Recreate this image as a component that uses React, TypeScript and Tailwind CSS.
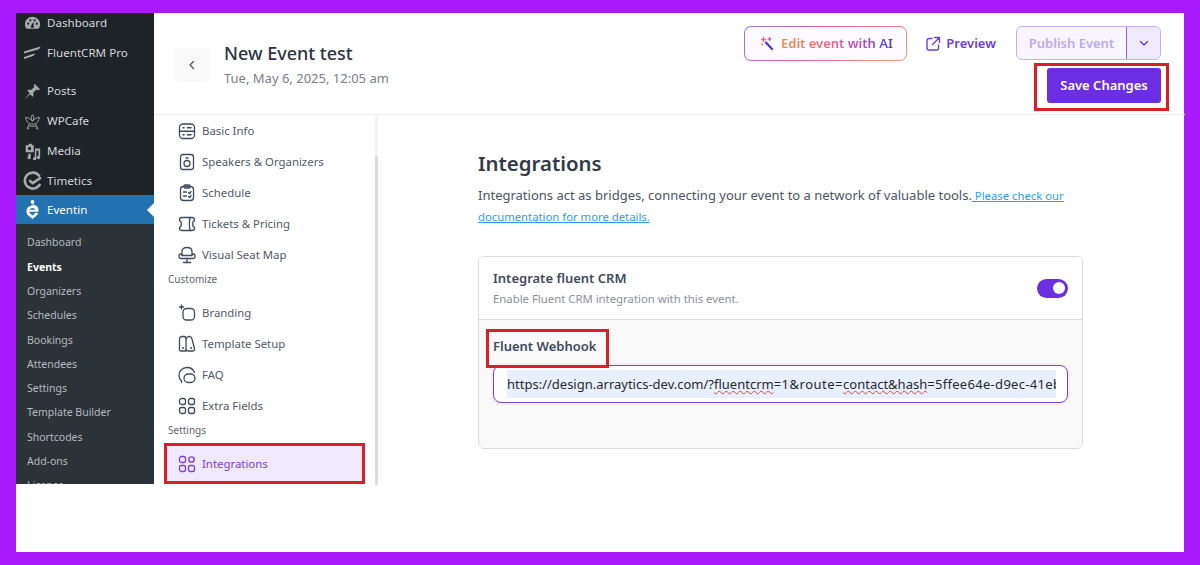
import React from "react";

const S = "#3f4a5c";

function I({ children, c = S, w = 20 }: { children: React.ReactNode; c?: string; w?: number }) {
  return (
    <svg width={w} height={w} viewBox="0 0 20 20" fill="none" stroke={c} strokeWidth="1.3" strokeLinecap="round" strokeLinejoin="round" className="shrink-0">
      {children}
    </svg>
  );
}

const navIcons: Record<string, React.ReactNode> = {
  basic: (
    <I>
      <rect x="2.500" y="3" width="15" height="14.500" rx="3.500" />
      <path d="M2.500 10.250h15M6 6.700h1M10.500 6.700h3.500M6 13.800h1M10.500 13.800h3.500" strokeWidth="1.600" />
    </I>
  ),
  speakers: (
    <I>
      <rect x="3.500" y="2.500" width="13" height="15" rx="2.500" />
      <circle cx="10" cy="11.500" r="3" />
      <path d="M9 6h2" />
    </I>
  ),
  schedule: (
    <I>
      <rect x="3.500" y="3.500" width="13" height="14" rx="3" />
      <rect x="7" y="2" width="6" height="3" rx="1" />
      <path d="M6.500 9h3M6.500 13h3M11.500 9.500l1 1 1.500-2M11.500 13.500l1 1 1.500-2" />
    </I>
  ),
  tickets: (
    <I>
      <path d="M5 3.500h10c1.500 0 2.500.7 2.500 2v1.200c-2.400.6-2.400 6 0 6.600v1.200c0 1.300-1 2-2.500 2H5c-1.500 0-2.500-.7-2.500-2v-1.200c2.400-.6 2.400-6 0-6.600V5.500c0-1.300 1-2 2.500-2z" />
      <path d="M13.500 3.500c-1.500 2-1.500 11 0 13" />
    </I>
  ),
  seat: (
    <I>
      <path d="M5 10V6.500C5 4 7 2.500 10 2.500s5 1.500 5 4V10" />
      <path d="M3.500 9c-1 0-1.500.8-1.500 1.600v1.200c0 1 .7 1.700 1.700 1.700h12.600c1 0 1.700-.7 1.700-1.700v-1.200c0-.8-.5-1.600-1.500-1.600-.8 0-1.500.6-1.500 1.500H5C5 9.600 4.300 9 3.500 9z" />
      <path d="M10 13.500v4M6.500 17.500h7" />
    </I>
  ),
  branding: (
    <I>
      <rect x="6" y="5.500" width="11.500" height="11.500" rx="3.500" />
      <path d="M4.500 2v4M2.500 4h4" />
    </I>
  ),
  template: (
    <I>
      <path d="M2.500 5c0-1.500 1-2.500 2.500-2.500h2C8.500 2.500 9 3.500 9 5v12H4c-1 0-1.500-.7-1.500-1.500z" />
      <path d="M9 5c.8-2 2-2.700 3.500-2.500 1.500.2 2.200 1.200 2.500 2.500l2.500 9.500c.2 1.500-.5 2.500-2 2.500h-4c-1.200 0-2.500-.7-2.500-1.500" />
      <path d="M6 14h.1M14 14h.1" strokeWidth="1.800" />
    </I>
  ),
  faq: (
    <I>
      <path d="M4.500 16C3 14.700 2 12.800 2 10.500 2 6 5.500 2.500 10 2.500c3.500 0 6.300 1.800 7.500 5" />
      <rect x="7" y="9" width="11" height="8.500" rx="4.200" />
      <path d="M4.500 16v1.500" />
    </I>
  ),
  extra: (
    <I>
      <rect x="2.500" y="2.500" width="6" height="6" rx="2" />
      <rect x="11.500" y="2.500" width="6" height="6" rx="2" />
      <rect x="2.500" y="11.500" width="6" height="6" rx="2" />
      <rect x="11.500" y="11.500" width="6" height="6" rx="2" />
    </I>
  ),
  integrations: (
    <I c="#7a3fe0">
      <rect x="2.500" y="2.500" width="6" height="6" rx="2" />
      <circle cx="14.500" cy="5.500" r="2.700" />
      <rect x="2.500" y="11.500" width="6" height="6" rx="2" />
      <rect x="11.500" y="11.500" width="6" height="6" rx="2" />
    </I>
  ),
};

function NavItem({ icon, label }: { icon: string; label: string }) {
  return (
    <div className="flex items-center gap-[5px] h-[31px] pl-[23px] text-[11.400px] text-[#515a68]">
      {navIcons[icon]}
      <span>{label}</span>
    </div>
  );
}

const G = "#a7aaad";

const wpIcons: Record<string, React.ReactNode> = {
  dashboard: (
    <svg width="17" height="17" viewBox="0 0 20 20" fill={G}>
      <path d="M10 2a9 9 0 0 0-8 13c.4.800 1 1.300 1.800 1.300h12.400c.8 0 1.400-.5 1.800-1.300A9 9 0 0 0 10 2zM5 11.500a1.300 1.300 0 1 1 0-2.600 1.300 1.300 0 0 1 0 2.600zm2.500-4a1.300 1.300 0 1 1 0-2.600 1.300 1.300 0 0 1 0 2.600zm3.800 7a1.700 1.700 0 0 1-3.200-.8c0-.7 3-5.700 3-5.700s.6 5.800.2 6.500zM12.500 7.500a1.300 1.300 0 1 1 0-2.600 1.300 1.300 0 0 1 0 2.600zm2.500 4a1.300 1.300 0 1 1 0-2.600 1.300 1.300 0 0 1 0 2.600z" />
    </svg>
  ),
  fluent: (
    <svg width="18" height="14" viewBox="0 0 18 14" fill={G}>
      <path d="M1 5.500C6 4 12 2 17.500.5 17 2 16.500 3 15 3.500L1 7.500z" />
      <path d="M1 11c3-1 7-2.500 11-3.500-.5 1.500-1 2.200-2.500 2.800L1 13z" />
    </svg>
  ),
  pin: (
    <svg width="17" height="17" viewBox="0 0 20 20" fill={G}>
      <path d="M19 7.500 12.500 1l-1 2.500.8 1-3.800 3.700c-1.700-.6-3.400-.4-4.800.6l3 3L1 19l6.200-5.700 3 3c1-1.400 1.200-3.100.6-4.800l3.700-3.800 1 .8z" />
    </svg>
  ),
  cafe: (
    <svg width="17" height="17" viewBox="0 0 20 20" fill="none" stroke={G} strokeWidth="1.100">
      <path d="M10 2c2 2.500 2 5 0 7.500C8 7 8 4.500 10 2zM2 5c3 .3 5.500 2 8 4.500 2.500-2.500 5-4.200 8-4.500-.3 3.500-2.200 6.500-5 8H7C4.200 11.500 2.300 8.500 2 5zM6 13l-1.500 4M14 13l1.500 4M6 15.500h8" />
      <circle cx="4.500" cy="18" r=".9" />
      <circle cx="15.500" cy="18" r=".9" />
    </svg>
  ),
  media: (
    <svg width="17" height="17" viewBox="0 0 20 20" fill={G}>
      <path d="M2 2.500h3l1-1.500h3l1 1.500h1.500V11H2zM6.500 8.500a2 2 0 1 0 0-4 2 2 0 0 0 0 4z" fillRule="evenodd" />
      <path d="M13 6.500h6V17a2 2 0 1 1-2-2V9h-2.500v9.500a2 2 0 1 1-2-2z" />
      <path d="M5 12.500h3V17a2 2 0 1 1-2-2h-1z" />
    </svg>
  ),
  timetics: (
    <svg width="19" height="19" viewBox="0 0 20 20" fill="none" stroke={G} strokeWidth="2.700" strokeLinecap="round" strokeLinejoin="round">
      <path d="M17 5A8.400 8.400 0 1 0 17.500 14.500" />
      <path d="M7.500 10.500l2.800 2.300 7.700-5.300" />
    </svg>
  ),
  eventin: (
    <svg width="13" height="19" viewBox="0 0 14 19" fill="#fff" preserveAspectRatio="none">
      <circle cx="7" cy="2" r="2" />
      <path d="M7 5.500c-3.600 0-6.500 2.500-6.500 5.800 0 2.200 1.200 3.800 3 5L7 19l3.500-2.700c1-.8 2-1.600 2.700-2.800l-2.500-1-3.700 3-2.400-2c-.6-.5-1-1.200-1-1.800h9.800c.1-.5.100-1 .1-1.400 0-3.300-2.900-5.800-6.500-5.800zM4 9.800C4.400 8.700 5.600 8 7 8s2.600.7 3 1.800z" fillRule="evenodd" />
    </svg>
  ),
};

function WpItem({ icon, label, h, active }: { icon: string; label: string; h: string; active?: boolean }) {
  return (
    <div className={`relative flex items-center ${h} ${active ? "bg-[#2271b1] text-white" : "text-[#d5d7d9]"}`}>
      <span className="w-[31px] flex justify-center shrink-0 pl-[1px]">{wpIcons[icon]}</span>
      <span>{label}</span>
      {active && (
        <span className="absolute right-0 top-1/2 -translate-y-1/2 border-y-[7px] border-y-transparent border-r-[7px] border-r-white" />
      )}
    </div>
  );
}

const subs = ["Dashboard", "Events", "Organizers", "Schedules", "Bookings", "Attendees", "Settings", "Template Builder", "Shortcodes", "Add-ons", "License"];

function WpSidebar() {
  return (
    <aside className="w-[138px] h-[471px] shrink-0 overflow-hidden bg-[#1d2327] text-[11.600px] leading-none">
      <WpItem icon="dashboard" label="Dashboard" h="h-[20px]" />
      <WpItem icon="fluent" label="FluentCRM Pro" h="h-[40px]" />
      <div className="h-[3px]" />
      <WpItem icon="pin" label="Posts" h="h-[30px]" />
      <WpItem icon="cafe" label="WPCafe" h="h-[30px]" />
      <WpItem icon="media" label="Media" h="h-[30px]" />
      <WpItem icon="timetics" label="Timetics" h="h-[29px]" />
      <WpItem icon="eventin" label="Eventin" h="h-[29px]" active />
      <div className="bg-[#2c3338] pt-[6.500px] h-[260px] overflow-hidden text-[10.500px]">
        {subs.map((s) => (
          <div key={s} className={`h-[24.300px] pl-[11px] flex items-center ${s === "Events" ? "font-bold text-white" : "text-[#b4b9be]"}`}>
            {s}
          </div>
        ))}
      </div>
    </aside>
  );
}

function Header() {
  return (
    <header className="h-[102px] shrink-0 border-b border-[#ececec] flex justify-between pl-[21px] pr-[24px]">
      <div className="flex items-center gap-[15px] h-[100px] pt-[4px]">
        <div className="w-[34px] h-[34px] rounded bg-[#f9f9f9] flex items-center justify-center">
          <svg width="14" height="14" viewBox="0 0 14 14" fill="none" stroke="#555" strokeWidth="1.300" strokeLinecap="round" strokeLinejoin="round">
            <path d="M8.500 3.500 5 7l3.500 3.500" />
          </svg>
        </div>
        <div className="-mt-[3px]">
          <div className="text-[18px] leading-[26px] font-medium text-[#2d3340]">New Event test</div>
          <div className="text-[13px] leading-[20px] mt-[2px] text-[#7b8089]">Tue, May 6, 2025, 12:05 am</div>
        </div>
      </div>
      <div className="flex flex-col items-end pt-[13px]">
        <div className="flex items-start">
          <div className="rounded-[7px] p-px bg-[linear-gradient(135deg,#8a7fe0,#e65f9f_45%,#f3a070)] mr-[18px]">
            <div className="h-[33px] w-[161px] rounded-[6px] bg-[#fdfaff] flex items-center justify-center gap-[6px] pt-[1px]">
              <svg width="16" height="16" viewBox="0 0 16 16" fill="none" strokeLinecap="round">
                <path d="M7 6.500l6 6.500" stroke="#4a35d8" strokeWidth="2.200" />
                <path d="M4.500 1.500v4M2.500 3.500h4" stroke="#f0637d" strokeWidth="1.400" />
                <path d="M10.500 1.500v3M9 3h3" stroke="#b044c8" strokeWidth="1.200" />
                <path d="M3 8.500h.1" stroke="#f08060" strokeWidth="2" />
              </svg>
              <span className="text-[13px] font-semibold bg-[linear-gradient(90deg,#f98a3c,#ec5f86_45%,#a64ccf_75%,#3f46d8)] bg-clip-text text-transparent">Edit event with AI</span>
            </div>
          </div>
          <div className="flex items-center gap-[5px] h-[35px] mr-[20px] text-[13px] font-semibold text-[#6d3fd8] pt-[1px]">
            <svg width="16" height="16" viewBox="0 0 16 16" fill="none" stroke="#6d3fd8" strokeWidth="1.400" strokeLinecap="round" strokeLinejoin="round">
              <path d="M7 2.500H4A2 2 0 0 0 2 4.500v7.500a2 2 0 0 0 2 2h7.500a2 2 0 0 0 2-2V9" />
              <path d="M9.500 1.500h5v5M14.500 1.500 7.500 8.500" />
            </svg>
            Preview
          </div>
          <div className="flex h-[34px] w-[145px] rounded-[6px] border border-[#c4b0ec] overflow-hidden bg-[#f8f5fe]">
            <div className="flex-1 flex items-center justify-center text-[13px] font-semibold text-[#bdaaee] pt-[1px]">Publish Event</div>
            <div className="w-[34px] bg-[#efe9fb] border-l border-[#8b6bd8] flex items-center justify-center">
              <svg width="12" height="12" viewBox="0 0 12 12" fill="none" stroke="#5b35c8" strokeWidth="1.300" strokeLinecap="round" strokeLinejoin="round">
                <path d="M2.500 4.500 6 8l3.500-3.500" />
              </svg>
            </div>
          </div>
        </div>
        <div className="relative mt-[7px]">
          <div className="h-[35px] w-[114px] rounded-[3px] bg-[#6b2ee0] text-white text-[13px] font-semibold flex items-center justify-center pt-[1px]">Save Changes</div>
          <div className="absolute -left-[13px] -right-[8px] -top-[5px] -bottom-[8px] border-[3px] border-[#dc1f26]" />
        </div>
      </div>
    </header>
  );
}

function Nav() {
  return (
    <nav className="relative w-[224px] shrink-0 h-[370px] overflow-hidden">
      <NavItem icon="basic" label="Basic Info" />
      <NavItem icon="speakers" label="Speakers & Organizers" />
      <NavItem icon="schedule" label="Schedule" />
      <NavItem icon="tickets" label="Tickets & Pricing" />
      <NavItem icon="seat" label="Visual Seat Map" />
      <div className="pl-[14px] h-[19px] text-[10px] leading-[19px] text-[#5f6672]">Customize</div>
      <div className="h-[8px]" />
      <NavItem icon="branding" label="Branding" />
      <NavItem icon="template" label="Template Setup" />
      <NavItem icon="faq" label="FAQ" />
      <NavItem icon="extra" label="Extra Fields" />
      <div className="pl-[14px] h-[19px] text-[10px] leading-[19px] text-[#5f6672]">Settings</div>
      <div className="mt-[6px] ml-[13px] w-[195px] h-[35px] rounded-[3px] bg-[#f0e9fb] flex items-center gap-[5px] pl-[10px] text-[11.400px] text-[#7a3fe0]">
        {navIcons.integrations}
        <span>Integrations</span>
      </div>
      <div className="absolute left-[10px] top-[328px] w-[201px] h-[41px] border-[3px] border-[#dc1f26]" />
      <div className="absolute right-0 top-0 bottom-0 w-[3px] bg-[#f3f3f3]">
        <div className="mt-[41px] h-[329px] bg-[#dcdcdc]" />
      </div>
    </nav>
  );
}

function Content() {
  return (
    <main className="flex-1 pl-[100px] pr-[102px] pt-[32px]">
      <h1 className="text-[20.400px] leading-[32px] font-semibold text-[#333a47]">Integrations</h1>
      <p className="mt-[6px] text-[13px] leading-[21px] text-[#4b5563]">
        Integrations act as bridges, connecting your event to a network of valuable tools.
        <span className="text-[11.300px] text-[#2f9cf0] underline"> Please check our documentation for more details.</span>
      </p>
      <section className="mt-[29px] h-[193px] rounded-[6px] border border-[#dcdcdc] overflow-hidden">
        <div className="h-[63px] bg-white border-b border-[#dcdcdc] flex items-center justify-between pl-[14px] pr-[14px]">
          <div>
            <div className="-mt-[1px] text-[13px] leading-[18px] font-semibold text-[#3f4a5c]">Integrate fluent CRM</div>
            <div className="mt-[4px] text-[11.350px] leading-[15px] text-[#8a8f98]">Enable Fluent CRM integration with this event.</div>
          </div>
          <div className="w-[31px] h-[19px] rounded-full bg-[#6b2ee0] flex items-center justify-end pr-[3px]">
            <span className="w-[12px] h-[12px] rounded-full bg-white" />
          </div>
        </div>
        <div className="h-[129px] bg-[#f9f9f9] px-[14px] pt-[16px]">
          <div className="text-[13px] leading-[20px] font-semibold text-[#3f4a5c]">Fluent Webhook</div>
          <div className="mt-[9px] h-[38px] w-[575px] rounded-[8px] border border-[#7d45d0] bg-white pl-[13px] pr-[11px] flex items-center shadow-[0_0_0_2px_#f3ecfd]">
            <div className="w-full h-[28px] bg-[#e8f0fe] overflow-hidden whitespace-nowrap text-[13px] leading-[28px] text-[#2a2a2a]">
              https://design.arraytics-dev.com/?<span className="underline decoration-wavy decoration-[#e0453a] decoration-1">fluentcrm</span><span className="tracking-[0.500px]">=1&amp;route=</span><span className="underline decoration-wavy decoration-[#e0453a] decoration-1">contact&amp;hash</span><span className="tracking-[0.300px]">=5ffee64e-d9ec-41eb</span>
            </div>
          </div>
        </div>
      </section>
    </main>
  );
}

export default function App() {
  return (
    <div className="w-[1200px] h-[565px] overflow-hidden bg-[#a919fd] pt-[13px] px-[16px] pb-[13px] font-['Noto_Sans','Open_Sans',sans-serif]">
      <div className="relative h-[539px] bg-white flex items-start">
        <WpSidebar />
        <div className="flex-1 h-[471px] flex flex-col">
          <Header />
          <div className="flex flex-1">
            <Nav />
            <Content />
          </div>
        </div>
        <div className="absolute left-[470px] top-[316px] w-[123px] h-[39px] border-[3px] border-[#dc1f26]" />
      </div>
    </div>
  );
}
